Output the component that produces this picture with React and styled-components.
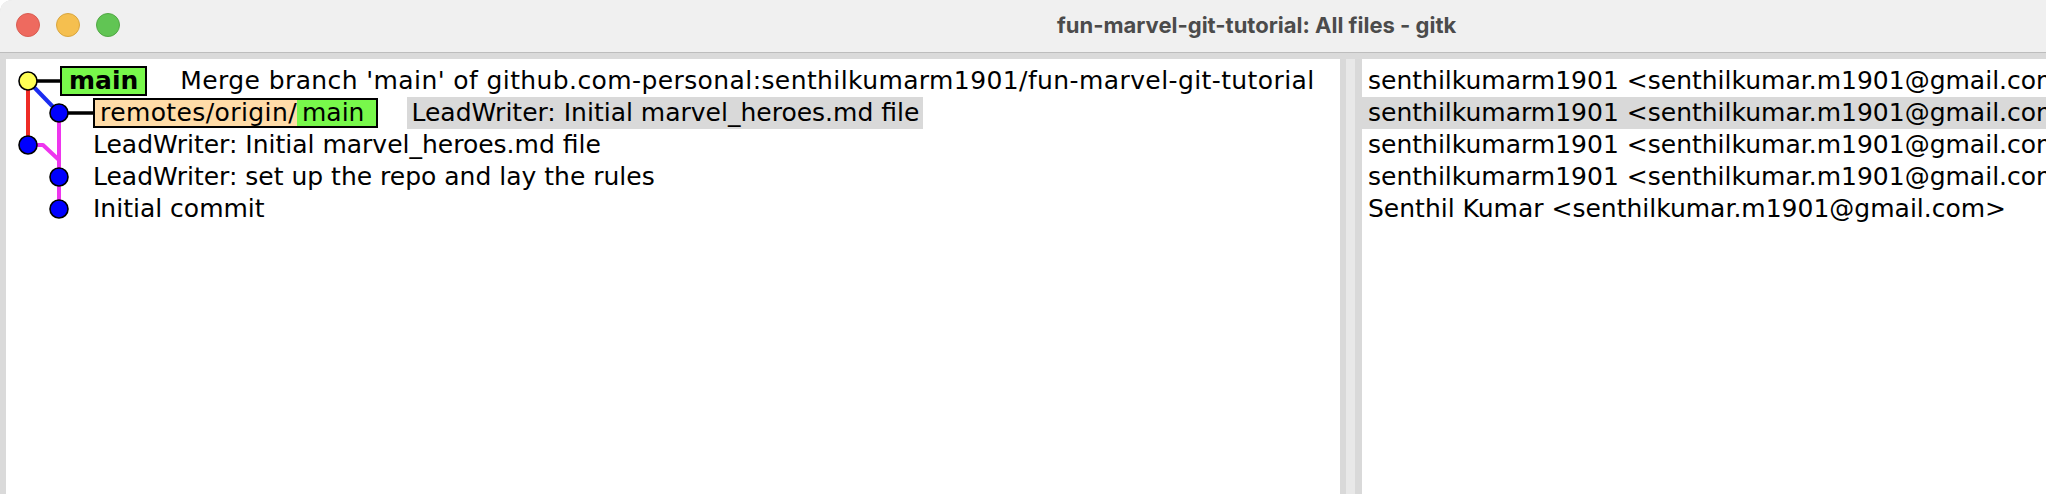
import React from "react";
import styled, { createGlobalStyle } from "styled-components";

const GlobalStyle = createGlobalStyle`
  html, body {
    margin: 0;
    padding: 0;
    background: #ffffff;
    overflow: hidden;
  }
`;

const Window = styled.div`
  width: 2046px;
  height: 494px;
  display: flex;
  flex-direction: column;
  border-top-left-radius: 12px;
  overflow: hidden;
  background: #dadada;
`;

const TitleBar = styled.div`
  height: 53px;
  flex: none;
  display: flex;
  align-items: center;
  padding: 0 0 2px 16px;
  box-sizing: border-box;
  background: #f0f0f0;
  border-bottom: 1px solid #bdbdbd;
`;

const Lights = styled.div`
  display: flex;
  gap: 16px;
`;

const Light = styled.span`
  width: 24px;
  height: 24px;
  border-radius: 50%;
  box-sizing: border-box;
  background: ${(p) => p.$fill};
  border: 1px solid ${(p) => p.$edge};
`;

const Title = styled.div`
  margin-left: 937px;
  font-family: Inter, "Liberation Sans", sans-serif;
  font-weight: 700;
  font-size: 22px;
  color: #4b4b4b;
  white-space: nowrap;
`;

const Body = styled.div`
  flex: 1;
  display: grid;
  grid-template-columns: 1334px 22px 1fr;
  padding: 6px 0 0 6px;
  min-height: 0;
`;

const Panel = styled.div`
  position: relative;
  background: #ffffff;
  padding-top: 6px;
  overflow: hidden;
  font-family: "DejaVu Sans", Verdana, sans-serif;
  font-size: 25px;
  color: #000;
`;

const Sash = styled.div`
  display: flex;
  padding: 0 7px 0 6px;
  background: #d9d9d9;
`;

const Grip = styled.div`
  flex: 1;
  background: #e8e8e8;
`;

const Row = styled.div`
  height: 32px;
  display: flex;
  align-items: center;
  gap: 29px;
  padding-left: ${(p) => p.$indent}px;
  white-space: nowrap;
`;

const Subject = styled.span`
  height: 32px;
  line-height: 32px;
  padding: 0 4px;
  letter-spacing: ${(p) => p.$track || 0}px;
  background: ${(p) => (p.$selected ? "#d9d9d9" : "transparent")};
`;

const Tag = styled.span`
  display: flex;
  height: 30px;
  box-sizing: border-box;
  border: 2px solid #000;
  line-height: 26px;
`;

const HeadPart = styled.span`
  background: #78f84b;
  padding: 0 ${(p) => p.$right}px 0 ${(p) => p.$left}px;
  font-weight: ${(p) => (p.$current ? 700 : 400)};
`;

const RemotePart = styled.span`
  background: #ffdca8;
  padding-left: 5px;
  letter-spacing: 0.4px;
`;

const AuthorRow = styled.div`
  height: 32px;
  line-height: 32px;
  padding-left: 6px;
  white-space: nowrap;
  background: ${(p) => (p.$selected ? "#d9d9d9" : "transparent")};
`;

const Graph = styled.svg`
  position: absolute;
  left: 0;
  top: 0;
  pointer-events: none;
`;

const commits = [
  {
    indent: 54,
    tag: "main",
    track: 0.4,
    subject:
      "Merge branch 'main' of github.com-personal:senthilkumarm1901/fun-marvel-git-tutorial",
    author: "senthilkumarm1901 <senthilkumar.m1901@gmail.com>",
  },
  {
    indent: 87,
    remote: true,
    subject: "LeadWriter: Initial marvel_heroes.md file",
    author: "senthilkumarm1901 <senthilkumar.m1901@gmail.com>",
    selected: true,
  },
  {
    indent: 83,
    subject: "LeadWriter: Initial marvel_heroes.md file",
    author: "senthilkumarm1901 <senthilkumar.m1901@gmail.com>",
  },
  {
    indent: 83,
    subject: "LeadWriter: set up the repo and lay the rules",
    author: "senthilkumarm1901 <senthilkumar.m1901@gmail.com>",
  },
  {
    indent: 83,
    subject: "Initial commit",
    author: "Senthil Kumar <senthilkumar.m1901@gmail.com>",
  },
];

function CommitGraph() {
  const y = (i) => 6 + 32 * i + 16;
  return (
    <Graph width="100" height="190" viewBox="0 0 100 190">
      <line x1="22" y1={y(0)} x2="55" y2={y(0)} stroke="#000" strokeWidth="3.5" />
      <line x1="53" y1={y(1)} x2="88" y2={y(1)} stroke="#000" strokeWidth="3.5" />
      <line x1="22" y1={y(0)} x2="22" y2={y(2)} stroke="#ee2b25" strokeWidth="4" />
      <line x1="22" y1={y(0)} x2="53" y2={y(1)} stroke="#1a2cf0" strokeWidth="4" />
      <line x1="53" y1={y(1)} x2="53" y2={y(4)} stroke="#ee35ee" strokeWidth="4" />
      <polyline
        points={`22,${y(2)} 37,${y(2)} 53,${y(2) + 15}`}
        fill="none"
        stroke="#ee35ee"
        strokeWidth="4"
        strokeLinejoin="round"
      />
      <circle cx="22" cy={y(0)} r="9" fill="#ffff55" stroke="#000" strokeWidth="1.6" />
      <circle cx="53" cy={y(1)} r="9" fill="#0000ff" stroke="#000" strokeWidth="1.6" />
      <circle cx="22" cy={y(2)} r="9" fill="#0000ff" stroke="#000" strokeWidth="1.6" />
      <circle cx="53" cy={y(3)} r="9" fill="#0000ff" stroke="#000" strokeWidth="1.6" />
      <circle cx="53" cy={y(4)} r="9" fill="#0000ff" stroke="#000" strokeWidth="1.6" />
    </Graph>
  );
}

export default function App() {
  return (
    <>
      <GlobalStyle />
      <Window>
        <TitleBar>
          <Lights>
            <Light $fill="#ee6a5f" $edge="#d95d52" />
            <Light $fill="#f5bf4f" $edge="#d9a63f" />
            <Light $fill="#61c554" $edge="#52a845" />
          </Lights>
          <Title>fun-marvel-git-tutorial: All files - gitk</Title>
        </TitleBar>
        <Body>
          <Panel>
            <CommitGraph />
            {commits.map((c, i) => (
              <Row key={i} $indent={c.indent}>
                {c.tag && (
                  <Tag>
                    <HeadPart $current $left={7} $right={7}>
                      {c.tag}
                    </HeadPart>
                  </Tag>
                )}
                {c.remote && (
                  <Tag>
                    <RemotePart>remotes/origin/</RemotePart>
                    <HeadPart $left={5} $right={12}>
                      main
                    </HeadPart>
                  </Tag>
                )}
                <Subject $selected={c.selected} $track={c.track}>
                  {c.subject}
                </Subject>
              </Row>
            ))}
          </Panel>
          <Sash>
            <Grip />
          </Sash>
          <Panel>
            {commits.map((c, i) => (
              <AuthorRow key={i} $selected={c.selected}>
                {c.author}
              </AuthorRow>
            ))}
          </Panel>
        </Body>
      </Window>
    </>
  );
}
